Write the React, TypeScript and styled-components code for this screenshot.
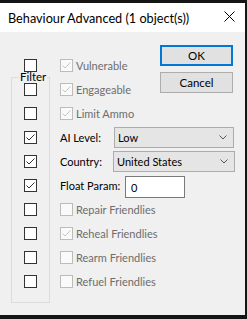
import styled, { createGlobalStyle } from 'styled-components';

const GlobalStyle = createGlobalStyle`
  html, body {
    margin: 0;
    padding: 0;
    background: #151515;
  }
  body {
    font-family: Lato, "Liberation Sans", sans-serif;
    -webkit-font-smoothing: antialiased;
  }
`;

const Screen = styled.div`
  width: 247px;
  height: 319px;
  padding-top: 3px;
  box-sizing: border-box;
`;

const Window = styled.div`
  width: 245px;
  height: 312px;
  background: #f0f0f0;
  display: flex;
  flex-direction: column;
`;

const TitleBar = styled.div`
  height: 29px;
  background: #fff;
  display: flex;
  align-items: center;
  padding: 0 10px 0 8px;
`;

const Title = styled.span`
  flex: 1;
  font-size: 12.7px;
  color: #000;
  white-space: nowrap;
`;

const CloseIcon = styled.svg`
  width: 11px;
  height: 11px;
  margin-top: -2px;
`;

const Body = styled.div`
  display: grid;
  grid-template-columns: 39px 1fr;
  column-gap: 10px;
  padding: 13px 10px 0 11px;
  font-size: 11px;
`;

const FilterColumn = styled.div`
  grid-column: 1;
  grid-row: 1;
  padding-top: 8px;
  display: flex;
  flex-direction: column;
`;

const FilterCell = styled.div`
  height: 24px;
  display: flex;
  align-items: center;
  justify-content: center;
`;

const FilterGroup = styled.fieldset`
  margin: -6px 0 0;
  padding: 0 0 9px;
  border: 1px solid #dcdcdc;
  min-width: 0;
`;

const FilterLegend = styled.legend`
  margin-left: 7px;
  padding: 0 1px;
  font-size: 11.5px;
  line-height: 12px;
  color: #000;
`;

const FilterList = styled.div`
  margin-top: -6px;
  display: flex;
  flex-direction: column;
`;

const FieldColumn = styled.div`
  grid-column: 2;
  grid-row: 1;
  padding-top: 8px;
  display: flex;
  flex-direction: column;
`;

const Row = styled.div`
  height: 24px;
  display: flex;
  align-items: center;
  gap: 3px;
`;

const FieldLabel = styled.span<{ $width: number; $disabled?: boolean }>`
  width: ${(p) => p.$width}px;
  flex: none;
  color: ${(p) => (p.$disabled ? '#6d6d6d' : '#000')};
  white-space: nowrap;
`;

const CheckLabel = styled.span<{ $disabled?: boolean }>`
  color: ${(p) => (p.$disabled ? '#6d6d6d' : '#000')};
  white-space: nowrap;
`;

const Box = styled.span<{ $disabled?: boolean }>`
  width: 13px;
  height: 13px;
  box-sizing: border-box;
  flex: none;
  border: 1px solid ${(p) => (p.$disabled ? '#bcbcbc' : '#333')};
  background: ${(p) => (p.$disabled ? '#fafafa' : '#fff')};
  display: flex;
  align-items: center;
  justify-content: center;
`;

const ComboBox = styled.div<{ $inset: number }>`
  flex: 1;
  height: 21px;
  margin-right: ${(p) => p.$inset}px;
  box-sizing: border-box;
  border: 1px solid #acacac;
  background: #e5e5e5;
  display: flex;
  align-items: center;
  padding: 0 6px 0 3px;
  color: #000;
`;

const ComboText = styled.span`
  flex: 1;
  white-space: nowrap;
`;

const TextInput = styled.div`
  width: 60px;
  height: 22px;
  margin-top: 4px;
  box-sizing: border-box;
  border: 1px solid #7a7a7a;
  background: #fff;
  display: flex;
  align-items: center;
  padding-left: 5px;
  color: #000;
`;

const ButtonStack = styled.div`
  grid-column: 2;
  grid-row: 1;
  justify-self: end;
  align-self: start;
  margin-right: 2px;
  display: flex;
  flex-direction: column;
  gap: 6px;
`;

const DialogButton = styled.div<{ $default?: boolean }>`
  width: 73px;
  height: 21px;
  box-sizing: border-box;
  border: ${(p) => (p.$default ? '2px solid #0078d7' : '1px solid #adadad')};
  background: #e1e1e1;
  display: flex;
  align-items: center;
  justify-content: center;
  color: #000;
  font-size: 11.5px;
`;

/* helper components */
const CheckBox = ({ checked, disabled }: { checked?: boolean; disabled?: boolean }) => (
  <Box $disabled={disabled}>
    {checked && (
      <svg width="11" height="11" viewBox="0 0 11 11">
        <polyline
          points="1.5,5.5 4,8 9.5,2.5"
          fill="none"
          stroke={disabled ? '#c4c4c4' : '#333'}
          strokeWidth="1"
        />
      </svg>
    )}
  </Box>
);

const Chevron = () => (
  <svg width="8" height="5" viewBox="0 0 8 5">
    <polyline points="0.5,0.5 4,4 7.5,0.5" fill="none" stroke="#555" strokeWidth="1" />
  </svg>
);

const filterChecks = [false, false, false, true, true, true, false, false, false, false];

const optionRows = [
  { label: 'Vulnerable', checked: true },
  { label: 'Engageable', checked: true },
  { label: 'Limit Ammo', checked: true },
];

const friendlyRows = [
  { label: 'Repair Friendlies', checked: false },
  { label: 'Reheal Friendlies', checked: true },
  { label: 'Rearm Friendlies', checked: false },
  { label: 'Refuel Friendlies', checked: false },
];

export default function App() {
  return (
    <>
      <GlobalStyle />
      <Screen>
        <Window>
          <TitleBar>
            <Title>Behaviour Advanced (1 object(s))</Title>
            <CloseIcon viewBox="0 0 11 11">
              <path d="M0.5 0.5 L10.5 10.5 M10.5 0.5 L0.5 10.5" stroke="#000" strokeWidth="1" />
            </CloseIcon>
          </TitleBar>

          <Body>
            <FilterColumn>
              <FilterCell>
                <CheckBox checked={filterChecks[0]} />
              </FilterCell>
              <FilterGroup>
                <FilterLegend>Filter</FilterLegend>
                <FilterList>
                  {filterChecks.slice(1).map((checked, i) => (
                    <FilterCell key={i}>
                      <CheckBox checked={checked} />
                    </FilterCell>
                  ))}
                </FilterList>
              </FilterGroup>
            </FilterColumn>

            <FieldColumn>
              {optionRows.map((row) => (
                <Row key={row.label}>
                  <CheckBox checked={row.checked} disabled />
                  <CheckLabel $disabled>{row.label}</CheckLabel>
                </Row>
              ))}
              <Row>
                <FieldLabel $width={51}>AI Level:</FieldLabel>
                <ComboBox $inset={1}>
                  <ComboText>Low</ComboText>
                  <Chevron />
                </ComboBox>
              </Row>
              <Row>
                <FieldLabel $width={50}>Country:</FieldLabel>
                <ComboBox $inset={0}>
                  <ComboText>United States</ComboText>
                  <Chevron />
                </ComboBox>
              </Row>
              <Row>
                <FieldLabel $width={62}>Float Param:</FieldLabel>
                <TextInput>0</TextInput>
              </Row>
              {friendlyRows.map((row) => (
                <Row key={row.label}>
                  <CheckBox checked={row.checked} disabled />
                  <CheckLabel $disabled>{row.label}</CheckLabel>
                </Row>
              ))}
            </FieldColumn>

            <ButtonStack>
              <DialogButton $default>OK</DialogButton>
              <DialogButton>Cancel</DialogButton>
            </ButtonStack>
          </Body>
        </Window>
      </Screen>
    </>
  );
}
